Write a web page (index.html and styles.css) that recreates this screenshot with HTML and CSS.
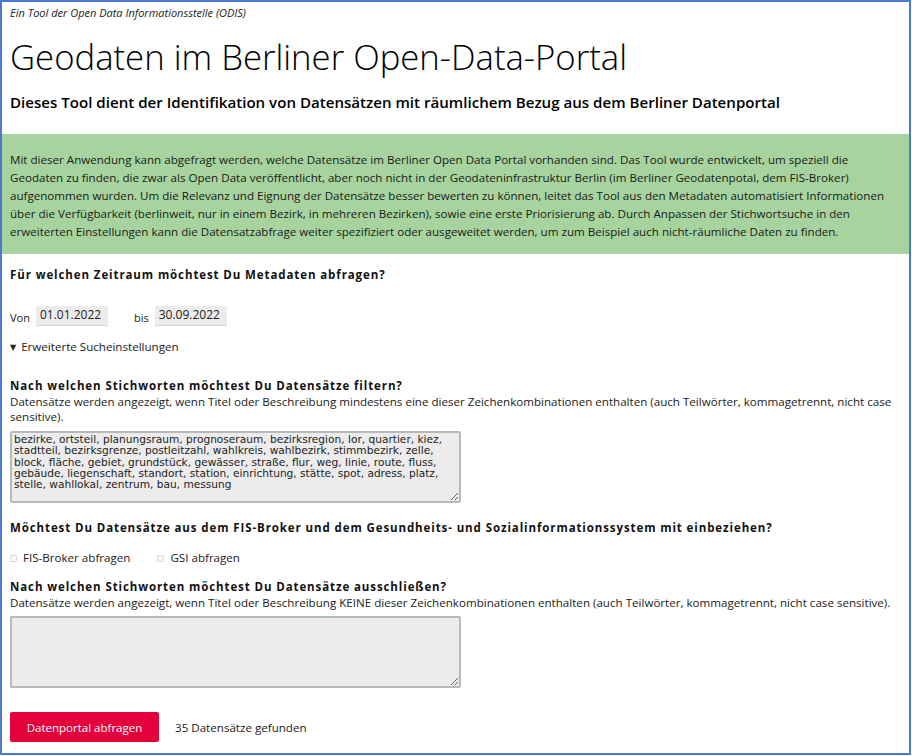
FILE: index.html
```html
<!DOCTYPE html>
<html lang="de">
<head>
<meta charset="utf-8">
<title>Geodaten im Berliner Open-Data-Portal</title>
<link rel="stylesheet" href="styles.css">
</head>
<body>
<div class="frame">
  <header class="head">
    <p class="kicker">Ein Tool der Open Data Informationsstelle (ODIS)</p>
    <h1 class="title">Geodaten im Berliner Open-Data-Portal</h1>
    <h2 class="lead">Dieses Tool dient der Identifikation von Datensätzen mit räumlichem Bezug aus dem Berliner Datenportal</h2>
  </header>

  <section class="intro">
    <p>Mit dieser Anwendung kann abgefragt werden, welche Datensätze im Berliner Open Data Portal vorhanden sind. Das Tool wurde entwickelt, um speziell die Geodaten zu finden, die zwar als Open Data veröffentlicht, aber noch nicht in der Geodateninfrastruktur Berlin (im Berliner Geodatenpotal, dem FIS-Broker) aufgenommen wurden. Um die Relevanz und Eignung der Datensätze besser bewerten zu können, leitet das Tool aus den Metadaten automatisiert Informationen über die Verfügbarkeit (berlinweit, nur in einem Bezirk, in mehreren Bezirken), sowie eine erste Priorisierung ab. Durch Anpassen der Stichwortsuche in den erweiterten Einstellungen kann die Datensatzabfrage weiter spezifiziert oder ausgeweitet werden, um zum Beispiel auch nicht-räumliche Daten zu finden.</p>
  </section>

  <form class="form">
    <h3 class="q q-first">Für welchen Zeitraum möchtest Du Metadaten abfragen?</h3>
    <div class="dates">
      <label class="date">Von <input class="date-input" type="text" value="01.01.2022" readonly></label>
      <label class="date">bis <input class="date-input" type="text" value="30.09.2022" readonly></label>
    </div>

    <details class="more" open>
      <summary class="more-sum"><span class="tri">▼</span>Erweiterte Sucheinstellungen</summary>

      <div class="block block-filter">
        <h3 class="q">Nach welchen Stichworten möchtest Du Datensätze filtern?</h3>
        <p class="hint">Datensätze werden angezeigt, wenn Titel oder Beschreibung mindestens eine dieser Zeichenkombinationen enthalten (auch Teilwörter, kommagetrennt, nicht case sensitive).</p>
        <textarea class="area">bezirke, ortsteil, planungsraum, prognoseraum, bezirksregion, lor, quartier, kiez, stadtteil, bezirksgrenze, postleitzahl, wahlkreis, wahlbezirk, stimmbezirk, zelle, block, fläche, gebiet, grundstück, gewässer, straße, flur, weg, linie, route, fluss, gebäude, liegenschaft, standort, station, einrichtung, stätte, spot, adress, platz, stelle, wahllokal, zentrum, bau, messung</textarea>
      </div>

      <div class="block block-sources">
        <h3 class="q">Möchtest Du Datensätze aus dem FIS-Broker und dem Gesundheits- und Sozialinformationssystem mit einbeziehen?</h3>
        <div class="checks">
          <label class="check"><input class="box" type="checkbox">FIS-Broker abfragen</label>
          <label class="check"><input class="box" type="checkbox">GSI abfragen</label>
        </div>
      </div>

      <div class="block block-exclude">
        <h3 class="q">Nach welchen Stichworten möchtest Du Datensätze ausschließen?</h3>
        <p class="hint">Datensätze werden angezeigt, wenn Titel oder Beschreibung KEINE dieser Zeichenkombinationen enthalten (auch Teilwörter, kommagetrennt, nicht case sensitive).</p>
        <textarea class="area area-empty"></textarea>
      </div>
    </details>

    <div class="actions">
      <button class="btn" type="button">Datenportal abfragen</button>
      <span class="result">35 Datensätze gefunden</span>
    </div>
  </form>
</div>
</body>
</html>
```

FILE: styles.css
```css
* { box-sizing: border-box; }
html, body { margin: 0; padding: 0; background: #fff; }
body {
  font-family: "Open Sans", "DejaVu Sans", sans-serif;
  color: #111;
  font-size: 11.6px;
}
.frame {
  width: 911px;
  height: 755px;
  border: 2px solid #4d79cf;
  overflow: hidden;
}
.head { padding: 4px 8px 0 8px; }
.kicker {
  margin: 0;
  font-style: italic;
  font-size: 11px;
  line-height: 14px;
  color: #222;
}
.title {
  margin: 15px 0 0 0;
  font-weight: 300;
  font-size: 34.7px;
  line-height: 44px;
  color: #000;
}
.lead {
  margin: 13px 0 0 0;
  font-weight: 600;
  font-size: 15.1px;
  line-height: 20px;
  color: #000;
}
.intro {
  margin-top: 22px;
  background: #a7d49e;
  padding: 17px 24px 13px 8px;
}
.intro p {
  margin: 0;
  font-size: 11.6px;
  line-height: 18px;
  color: #1a1a1a;
}
.form { padding: 0 6px 0 8px; }
.q {
  margin: 0;
  font-weight: 700;
  font-size: 11.5px;
  letter-spacing: 0.9px;
  line-height: 16px;
  color: #111;
}
.q-first { margin-top: 13px; }
.dates {
  display: flex;
  gap: 26px;
  align-items: center;
  margin-top: 24px;
}
.date { display: flex; align-items: center; gap: 6px; font-size: 11px; line-height: 16px; padding-top: 2px; color: #222; }
.date-input {
  width: 72px;
  height: 20px;
  margin-top: -3px;
  border: none;
  border-bottom: 1px solid #d4d4d4;
  background: #ececec;
  font-family: inherit;
  font-size: 12px;
  color: #222;
  padding: 0 4px 2px 4px;
}
.more { margin-top: 13px; }
.more-sum {
  list-style: none;
  font-size: 11.6px;
  line-height: 16px;
  color: #222;
  cursor: pointer;
}
.more-sum::-webkit-details-marker { display: none; }
.tri { font-size: 8px; vertical-align: 1px; margin-right: 5px; }
.block-filter { margin-top: 23px; }
.block-sources { margin-top: 17px; }
.block-exclude { margin-top: 13px; }
.hint {
  margin: 0;
  font-size: 11.6px;
  line-height: 15px;
  color: #222;
}
.area {
  display: block;
  margin-top: 7px;
  width: 451px;
  height: 72px;
  background: #ececec;
  border: 2px solid #b9b9b9;
  border-radius: 2px;
  padding: 1px 5px 0 2px;
  font-family: "DejaVu Sans", sans-serif;
  font-size: 10.6px;
  line-height: 11.3px;
  color: #222;
  resize: both;
}
.area-empty { margin-top: 6px; }
.checks { display: flex; gap: 27px; margin-top: 14px; }
.check { display: flex; align-items: center; gap: 6px; font-size: 11.6px; line-height: 16px; color: #222; }
.box {
  appearance: none;
  -webkit-appearance: none;
  margin: 0;
  width: 7px;
  height: 7px;
  border: 1px solid #d8d8d8;
  border-radius: 1px;
  background: #fafafa;
}
.actions {
  display: flex;
  align-items: center;
  gap: 16px;
  margin-top: 24px;
}
.btn {
  width: 149px;
  height: 30px;
  background: #e3003b;
  color: #fff;
  border: none;
  border-radius: 2px;
  font-family: inherit;
  font-size: 11.5px;
}
.result { font-size: 11.6px; color: #222; }
```
